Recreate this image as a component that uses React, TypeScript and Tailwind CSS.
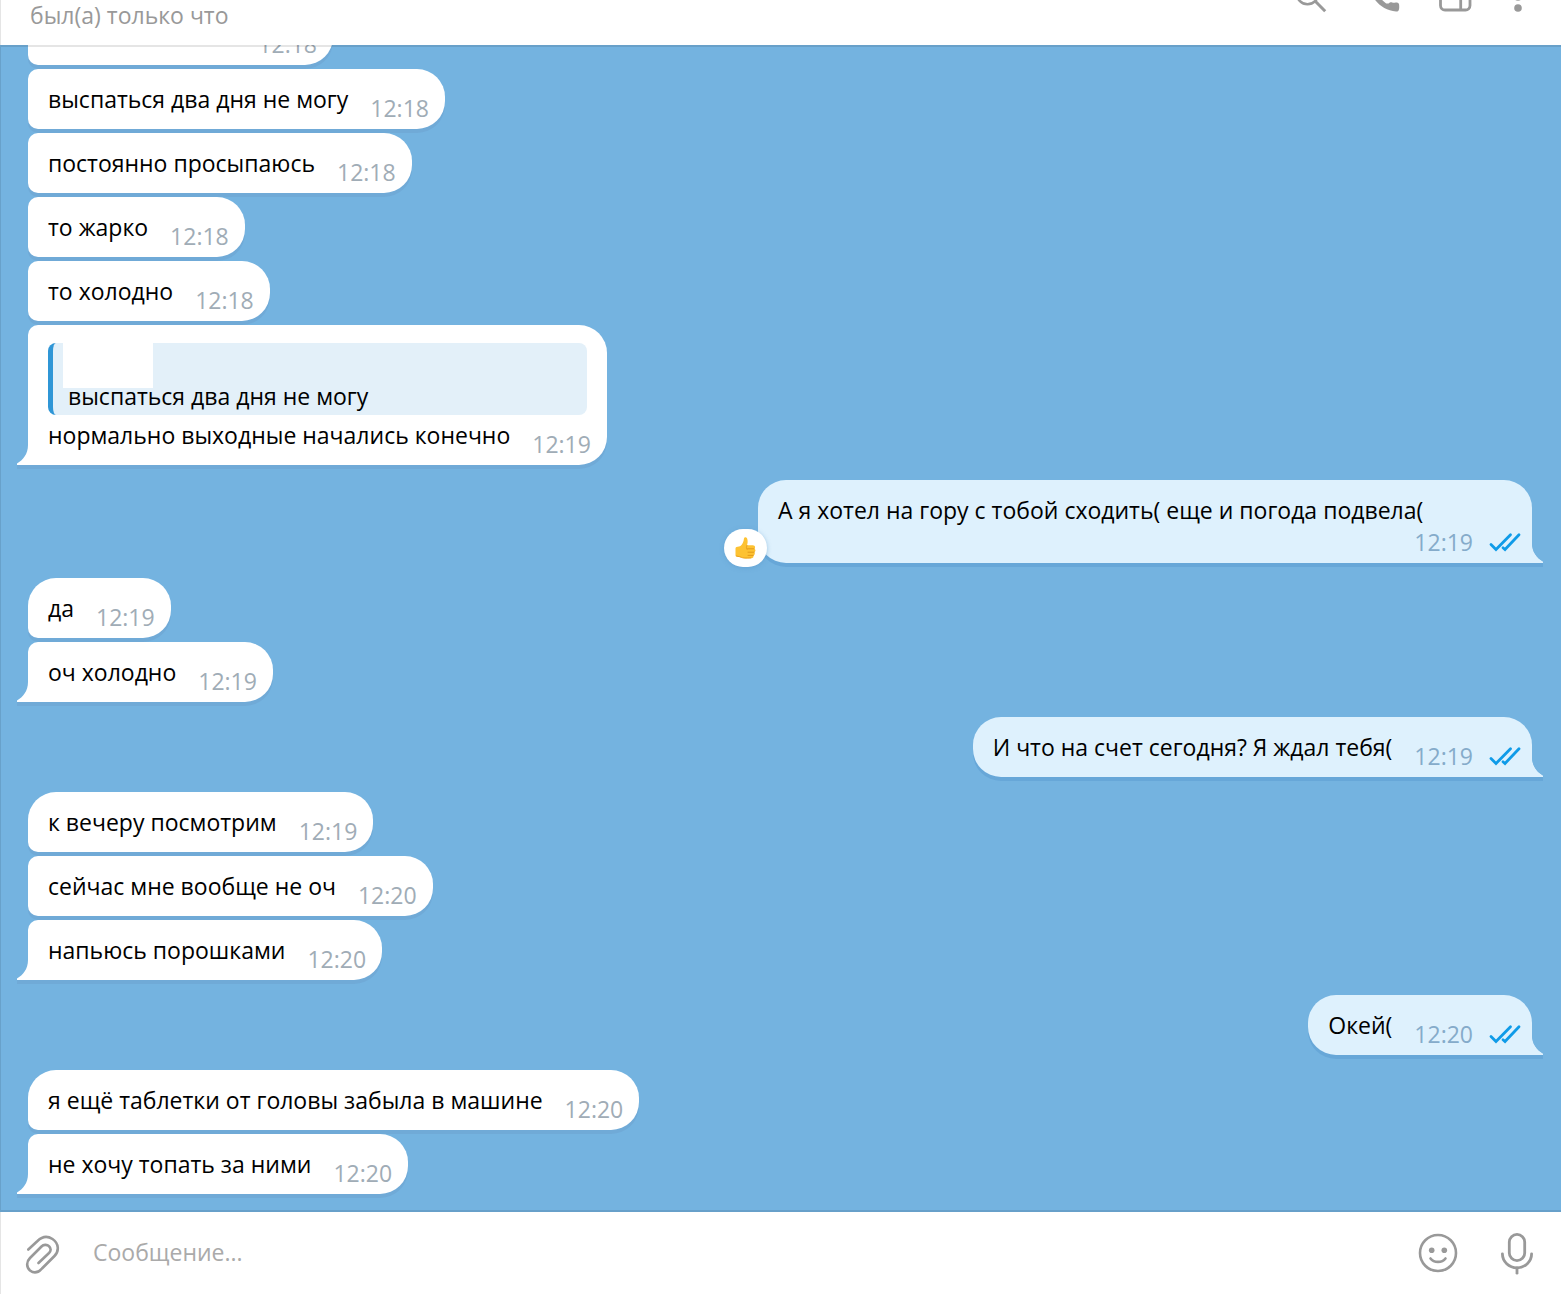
import React from "react";

type Message = { text: string; time: string; quote?: string; reaction?: boolean };
type Group = { out?: boolean; messages: Message[] };

const groups: Group[] = [
  {
    messages: [
      { text: "", time: "12:18" },
      { text: "выспаться два дня не могу", time: "12:18" },
      { text: "постоянно просыпаюсь", time: "12:18" },
      { text: "то жарко", time: "12:18" },
      { text: "то холодно", time: "12:18" },
      { text: "нормально выходные начались конечно", time: "12:19", quote: "выспаться два дня не могу" },
    ],
  },
  { out: true, messages: [{ text: "А я хотел на гору с тобой сходить( еще и погода подвела(", time: "12:19", reaction: true }] },
  { messages: [{ text: "да", time: "12:19" }, { text: "оч холодно", time: "12:19" }] },
  { out: true, messages: [{ text: "И что на счет сегодня? Я ждал тебя(", time: "12:19" }] },
  {
    messages: [
      { text: "к вечеру посмотрим", time: "12:19" },
      { text: "сейчас мне вообще не оч", time: "12:20" },
      { text: "напьюсь порошками", time: "12:20" },
    ],
  },
  { out: true, messages: [{ text: "Окей(", time: "12:20" }] },
  { messages: [{ text: "я ещё таблетки от головы забыла в машине", time: "12:20" }, { text: "не хочу топать за ними", time: "12:20" }] },
];

function Checks() {
  return (
    <svg className="h-5 w-8" viewBox="0 0 32 20" fill="none" stroke="#0f9be8" strokeWidth="2.8" strokeLinecap="round" role="img" aria-label="Прочитано">
      <path d="M2 12.5 L7 17.5 L21.5 2.8" />
      <path d="M14 15.8 L16 17.5 L30 2.8" />
    </svg>
  );
}

function Thumb() {
  return (
    <svg className="size-6" viewBox="0 0 24 24" role="img" aria-label="Нравится">
      <path d="M1.5 12.5 C1.5 11.2 3 10.8 5 10.6 C7.5 9.8 9.4 6.5 9.8 3.4 C10 0.6 13 0.8 13.4 3.4 C13.9 5.5 13.6 7.6 13 9.2 L18.8 9.2 C21.6 9.4 21.6 12.2 20.2 12.8 C22 13.4 21.8 15.8 20.2 16.2 C21.4 17 20.9 19 19.3 19.4 C20 20.8 19 22.2 17.2 22.2 L11.5 22.4 C9 22.4 7.5 21.2 5.5 21 L3 20.8 C1.8 20.6 1.5 20 1.5 19 Z" fill="#fdc232" />
      <path d="M13.5 12.8 H20.2 M14 16.2 H20.2 M14 19.4 H19.3" stroke="#e39a1a" strokeWidth="1" strokeLinecap="round" />
      <path d="M13 9.4 C12.4 11 12 12 13 13.4" stroke="#e39a1a" strokeWidth="0.9" fill="none" strokeLinecap="round" />
      <path d="M2 19.4 C2.5 20.6 5 20.2 7 21.2 C9 22.2 11 22 17.2 21.9" stroke="#eba21f" strokeWidth="1" fill="none" />
    </svg>
  );
}

function Tail({ out }: { out?: boolean }) {
  return out ? (
    <svg className="absolute -right-[11px] -bottom-1 h-[34px] w-[13px]" viewBox="0 0 13 34" aria-hidden="true">
      <path d="M0 28 H13 V34 H0 Z" fill="#67a7d8" />
      <path d="M0 0 H2 V10 C2 19 7 25 13 28.5 V30 H0 Z" fill="#def1fd" />
      <path d="M2 10 C2 19 7 25 13 28.5 V20 H13 V10 Z" fill="#74b3e0" />
    </svg>
  ) : (
    <svg className="absolute -bottom-1 -left-[11px] h-[34px] w-[13px]" viewBox="0 0 13 34" aria-hidden="true">
      <path d="M0 29 H13 V34 H0 Z" fill="#70aad7" />
      <path d="M13 0 H11 V10 C11 19 6 25 0 28.5 V30 H13 Z" fill="#ffffff" />
    </svg>
  );
}

function Bubble({ message, out, first, last }: { message: Message; out?: boolean; first: boolean; last: boolean }) {
  const shape = out
    ? "self-end bg-[#def1fd] pr-[11px] rounded-[28px] rounded-br-none shadow-[0_4px_0_#67a7d8]"
    : "self-start bg-white pr-4 rounded-r-[28px] shadow-[0_4px_0_#70aad7]";
  const top = out ? "" : first ? "rounded-tl-[28px]" : "rounded-tl-[10px]";
  const bottom = out ? "" : last ? "rounded-bl-none" : "rounded-bl-[10px]";
  const width = message.text ? "" : "w-[305px]";
  return (
    <article className={`relative max-w-[774px] shrink-0 pb-[5px] pl-5 ${message.quote ? "pt-[18px]" : "pt-[14px]"} ${shape} ${top} ${bottom} ${width}`}>
      {last && <Tail out={out} />}
      {message.quote && (
        <blockquote className="mr-1 mb-1 flex h-[72px] flex-col justify-between overflow-hidden rounded-lg border-l-[5px] border-[#2f96d6] bg-[#e3f0f9]">
          <div className="ml-[10px] h-[45px] w-[90px] shrink-0 bg-white" />
          <p className="-mt-2 mb-1 pl-[15px] leading-8">{message.quote}</p>
        </blockquote>
      )}
      <div className="flex flex-wrap items-end justify-between gap-x-[22px]">
        {message.text ? <p className="mb-[9px] leading-8">{message.text}</p> : <div className="h-[41px]" />}
        <div className={`-mt-[9px] ml-auto flex items-center gap-4 leading-8 ${out ? "text-[#85abca]" : "text-[#a0acb6]"}`}>
          <time>{message.time}</time>
          {out && <Checks />}
        </div>
      </div>
      {message.reaction && (
        <div className="absolute -bottom-1 -left-[34px] flex h-[38px] w-[43px] items-center justify-center rounded-full bg-white shadow-[0_1px_4px_#5b97c880]">
          <Thumb />
        </div>
      )}
    </article>
  );
}

const iconButton = "flex shrink-0 items-center justify-center text-[#999999]";

export default function App() {
  return (
    <div className="flex h-screen flex-col border-l border-[#e5e5e5] bg-white font-['Open_Sans','Noto_Sans',sans-serif] text-[23px] text-black">
      <header className="flex h-[45px] shrink-0 items-start justify-between overflow-hidden pr-[35px] pl-[29px]">
        <p className="leading-[30px] text-[#999999]">был(а) только что</p>
        <nav className="-mt-[23px] flex items-start">
          <button className={`${iconButton} mr-[39px]`} aria-label="Поиск">
            <svg className="size-9" viewBox="0 0 36 36" fill="none" stroke="currentColor" strokeWidth="2.6">
              <circle cx="16.5" cy="16.5" r="10.7" />
              <path d="M24 24 L34.2 34.2" strokeWidth="3" />
            </svg>
          </button>
          <button className={`${iconButton} mr-[35px]`} aria-label="Позвонить">
            <svg className="size-9" viewBox="0 0 36 36" fill="currentColor">
              <path d="M5 2 H11 C13 2 13.5 3 13.7 5 C13.9 7 14.2 8.5 14.7 10 C15.1 11.3 14.9 12 14 12.9 L10.8 16 C13 20.3 16.5 23.6 20.2 26.6 L22.6 26.6 C23.5 25.7 24.5 25.2 26 25.4 C28 25.9 29.5 25.6 31 25.6 C33 25.8 33.2 27.5 33.2 29 V31 C33 34 32 34.5 30 34.5 C15 33.5 3 20 2.5 5 C2.5 3 3 2 5 2 Z" />
            </svg>
          </button>
          <button className={`${iconButton} mr-[37px]`} aria-label="Боковая панель">
            <svg className="size-9" viewBox="0 0 36 36" fill="none" stroke="currentColor" strokeWidth="2.8">
              <rect x="3.5" y="4" width="29.5" height="29" rx="4.5" />
              <path d="M23.7 4 V33" />
            </svg>
          </button>
          <button className={iconButton} aria-label="Меню">
            <svg className="h-9 w-4" viewBox="0 0 16 36" fill="currentColor">
              <circle cx="8" cy="9" r="3.8" />
              <circle cx="8" cy="20" r="3.8" />
              <circle cx="8" cy="31" r="3.8" />
            </svg>
          </button>
        </nav>
      </header>
      <main className="relative -ml-px flex min-h-0 flex-1 flex-col justify-end gap-[15px] overflow-hidden border-l border-[#68a1ca] bg-[#74b3e0] pr-[29px] pb-[18px] pl-[27px]">
        <div className="absolute inset-x-0 top-0 z-10 h-0.5 bg-black/10" />
        {groups.map((group, g) => (
          <section key={g} className="flex shrink-0 flex-col gap-1">
            {group.messages.map((message, i) => (
              <Bubble key={i} message={message} out={group.out} first={i === 0} last={i === group.messages.length - 1} />
            ))}
          </section>
        ))}
        <div className="absolute inset-x-0 bottom-0 h-0.5 bg-[#67a0ca]" />
      </main>
      <footer className="flex h-[82px] shrink-0 items-center pr-[26px] pl-6">
        <button className={iconButton} aria-label="Прикрепить файл">
          <svg className="size-10 overflow-visible" viewBox="0 0 40 40" fill="none" stroke="currentColor" strokeWidth="2.6" strokeLinecap="round" strokeLinejoin="round">
            <path d="M3.3 16.5 L12.5 8 C17.5 3 23 3 27.5 6 C34 10.5 34.3 18 29.5 23 L17 35.5 C13 40 8.5 40.3 5 37.5 C1 34 1.5 28.5 5 25 L16.5 13.5 C18.5 11.5 22 11.2 24 13.2 C26.3 15.4 26 18 24 20 L13.5 30" />
          </svg>
        </button>
        <input className="ml-7 min-w-0 flex-1 bg-transparent pb-[3px] leading-8 outline-none placeholder:text-[#aaaaaa]" aria-label="Сообщение" placeholder="Сообщение..." />
        <button className={`${iconButton} mr-[41px]`} aria-label="Эмодзи">
          <svg className="size-10" viewBox="0 0 40 40" fill="none" stroke="currentColor" strokeWidth="2.6" strokeLinecap="round">
            <circle cx="20" cy="20" r="18" />
            <circle cx="13.7" cy="17.3" r="2.8" fill="currentColor" stroke="none" />
            <circle cx="26.3" cy="17.3" r="2.8" fill="currentColor" stroke="none" />
            <path d="M12.5 25.5 C16 30 24 30 27.5 25.5" />
          </svg>
        </button>
        <button className={iconButton} aria-label="Голосовое сообщение">
          <svg className="h-11 w-9" viewBox="0 0 36 44" fill="none" stroke="currentColor" strokeWidth="2.8" strokeLinecap="round">
            <rect x="10.3" y="3.4" width="15.4" height="26.2" rx="7.7" />
            <path d="M3.4 22.8 A14.6 14 0 0 0 32.6 22.8" />
            <path d="M18 37 V42.2" />
          </svg>
        </button>
      </footer>
    </div>
  );
}
